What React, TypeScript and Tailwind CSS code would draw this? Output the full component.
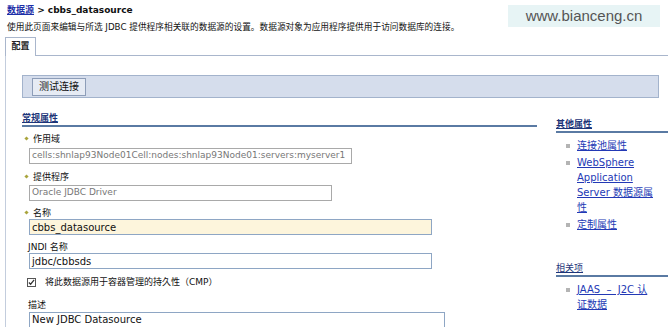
const FONT = "font-['DejaVu_Sans','Noto_Sans_CJK_SC',sans-serif]"

function Star() {
  return <span className="inline-block w-[3px] h-[3px] bg-[#a9a43c] rotate-45 mr-[5px] mb-[2px]" />
}

function Label({ text, required }: { text: string; required?: boolean }) {
  return (
    <div className={`flex items-center h-[11px] text-[9px] leading-[11px] text-[#111] ${required ? 'pl-[3px]' : 'pl-[6px]'}`}>
      {required && <Star />}
      <span>{text}</span>
    </div>
  )
}

function Field({ value, width, disabled, tint }: { value: string; width: string; disabled?: boolean; tint?: boolean }) {
  return (
    <div
      className={`ml-[7px] flex pl-[2px] border whitespace-nowrap overflow-hidden ${width} ${
        disabled
          ? 'h-[16px] items-center border-[#a9a9a9] bg-white text-[9px] text-[#777]'
          : `h-[16px] items-center border-[#8ea6c4] text-[10px] text-[#111] ${tint ? 'bg-[#fdf5dc]' : 'bg-white'}`
      }`}
    >
      {value}
    </div>
  )
}

function SideHeading({ text, bold }: { text: string; bold?: boolean }) {
  return (
    <div className={`text-[9px] leading-[11px] border-b-2 border-[#5a7aa3] pb-[1px] text-[#1d3579] ${bold ? 'font-bold' : ''}`}>
      <span className="underline">{text}</span>
    </div>
  )
}

function SideLink({ lines }: { lines: string }) {
  return (
    <li className="flex items-start">
      <span className="mt-[6px] ml-[10px] mr-[7px] w-[4px] h-[4px] bg-[#b4b4b4] shrink-0" />
      <a className="w-[80px] text-[10px] leading-[15px] text-[#2339b5] underline">{lines}</a>
    </li>
  )
}

export default function App() {
  return (
    <div className={`relative w-[668px] h-[327px] overflow-hidden bg-white ${FONT}`}>
      {/* watermark */}
      <div className="absolute left-[508px] top-[5px] w-[152px] h-[22px] bg-[#e7f4f5] flex items-center justify-center font-['Liberation_Sans',sans-serif] text-[15px] text-[#555]">
        www.bianceng.cn
      </div>

      <div className="pl-[7px] pt-[4px] text-[9px] leading-[12px] font-bold text-[#111]">
        <a className="text-[#1d2fa8] underline">数据源</a> &gt; cbbs_datasource
      </div>
      <div className="pl-[7px] mt-[5px] text-[8.7px] leading-[12px] text-[#111] whitespace-nowrap">
        使用此页面来编辑与所选 JDBC 提供程序相关联的数据源的设置。数据源对象为应用程序提供用于访问数据库的连接。
      </div>

      {/* tabs */}
      <div className="flex mt-[4px] pl-[5px]">
        <div className="w-[31px] h-[19px] border border-b-0 border-[#a9b6cc] flex items-center justify-center text-[9px] font-bold text-[#222]">
          配置
        </div>
        <div className="flex-1 border-b border-[#a9b6cc]" />
      </div>

      {/* panel */}
      <div className="ml-[5px] border-l border-[#c3cddd] h-[400px] pl-[16px] pt-[19px]">
        <div className="w-[637px] h-[23px] bg-[#d5ddec] border border-[#a3b3cc] flex items-center pl-[9px]">
          <button className="h-[18px] px-[6px] bg-[#e6ebf4] border border-[#8d9db8] text-[10px] leading-[16px] text-[#111]">
            测试连接
          </button>
        </div>

        <div className="flex gap-[19px]">
          {/* left column */}
          <div className="w-[515px] shrink-0">
            <div className="mt-[15px] text-[9px] leading-[11px] font-bold text-[#1d3579] border-b-2 border-[#5a7aa3] pb-[1px]">
              <span className="underline">常规属性</span>
            </div>

            <div className="mt-[7px]"><Label text="作用域" required /></div>
            <div className="mt-[3px]">
              <Field disabled width="w-[323px]" value="cells:shnlap93Node01Cell:nodes:shnlap93Node01:servers:myserver1" />
            </div>

            <div className="mt-[8px]"><Label text="提供程序" required /></div>
            <div className="mt-[2px]">
              <Field disabled width="w-[303px]" value="Oracle JDBC Driver" />
            </div>

            <div className="mt-[7px]"><Label text="名称" required /></div>
            <div>
              <Field tint width="w-[403px]" value="cbbs_datasource" />
            </div>

            <div className="mt-[7px]"><Label text="JNDI 名称" /></div>
            <div>
              <Field width="w-[403px]" value="jdbc/cbbsds" />
            </div>

            <label className="mt-[8px] flex items-center h-[11px] pl-[5px] text-[9px] text-[#111]">
              <span className="w-[9px] h-[9px] border border-[#555] bg-white flex items-center justify-center mr-[9px]">
                <svg viewBox="0 0 8 8" className="w-[7px] h-[7px]">
                  <path d="M1 4 L3 6 L7 1" fill="none" stroke="#333" strokeWidth="1.4" />
                </svg>
              </span>
              将此数据源用于容器管理的持久性（CMP）
            </label>

            <div className="mt-[12px]"><Label text="描述" /></div>
            <div className="mt-[1px]">
              <div className="ml-[7px] w-[416px] h-[18px] border border-[#8ea6c4] bg-white pl-[2px] text-[10px] leading-[13px] text-[#111] whitespace-nowrap">
                New JDBC Datasource
              </div>
            </div>
          </div>

          {/* right column */}
          <div className="w-[120px] shrink-0">
            <div className="mt-[21px]"><SideHeading text="其他属性" bold /></div>
            <ul className="mt-[5px] flex flex-col gap-[2px]">
              <SideLink lines="连接池属性" />
              <SideLink lines="WebSphere Application Server 数据源属性" />
              <SideLink lines="定制属性" />
            </ul>

            <div className="mt-[31px]"><SideHeading text="相关项" /></div>
            <ul className="mt-[5px]">
              <SideLink lines={'JAAS\u00a0\u00a0\u2013\u00a0\u00a0J2C 认证数据'} />
            </ul>
          </div>
        </div>
      </div>
    </div>
  )
}
